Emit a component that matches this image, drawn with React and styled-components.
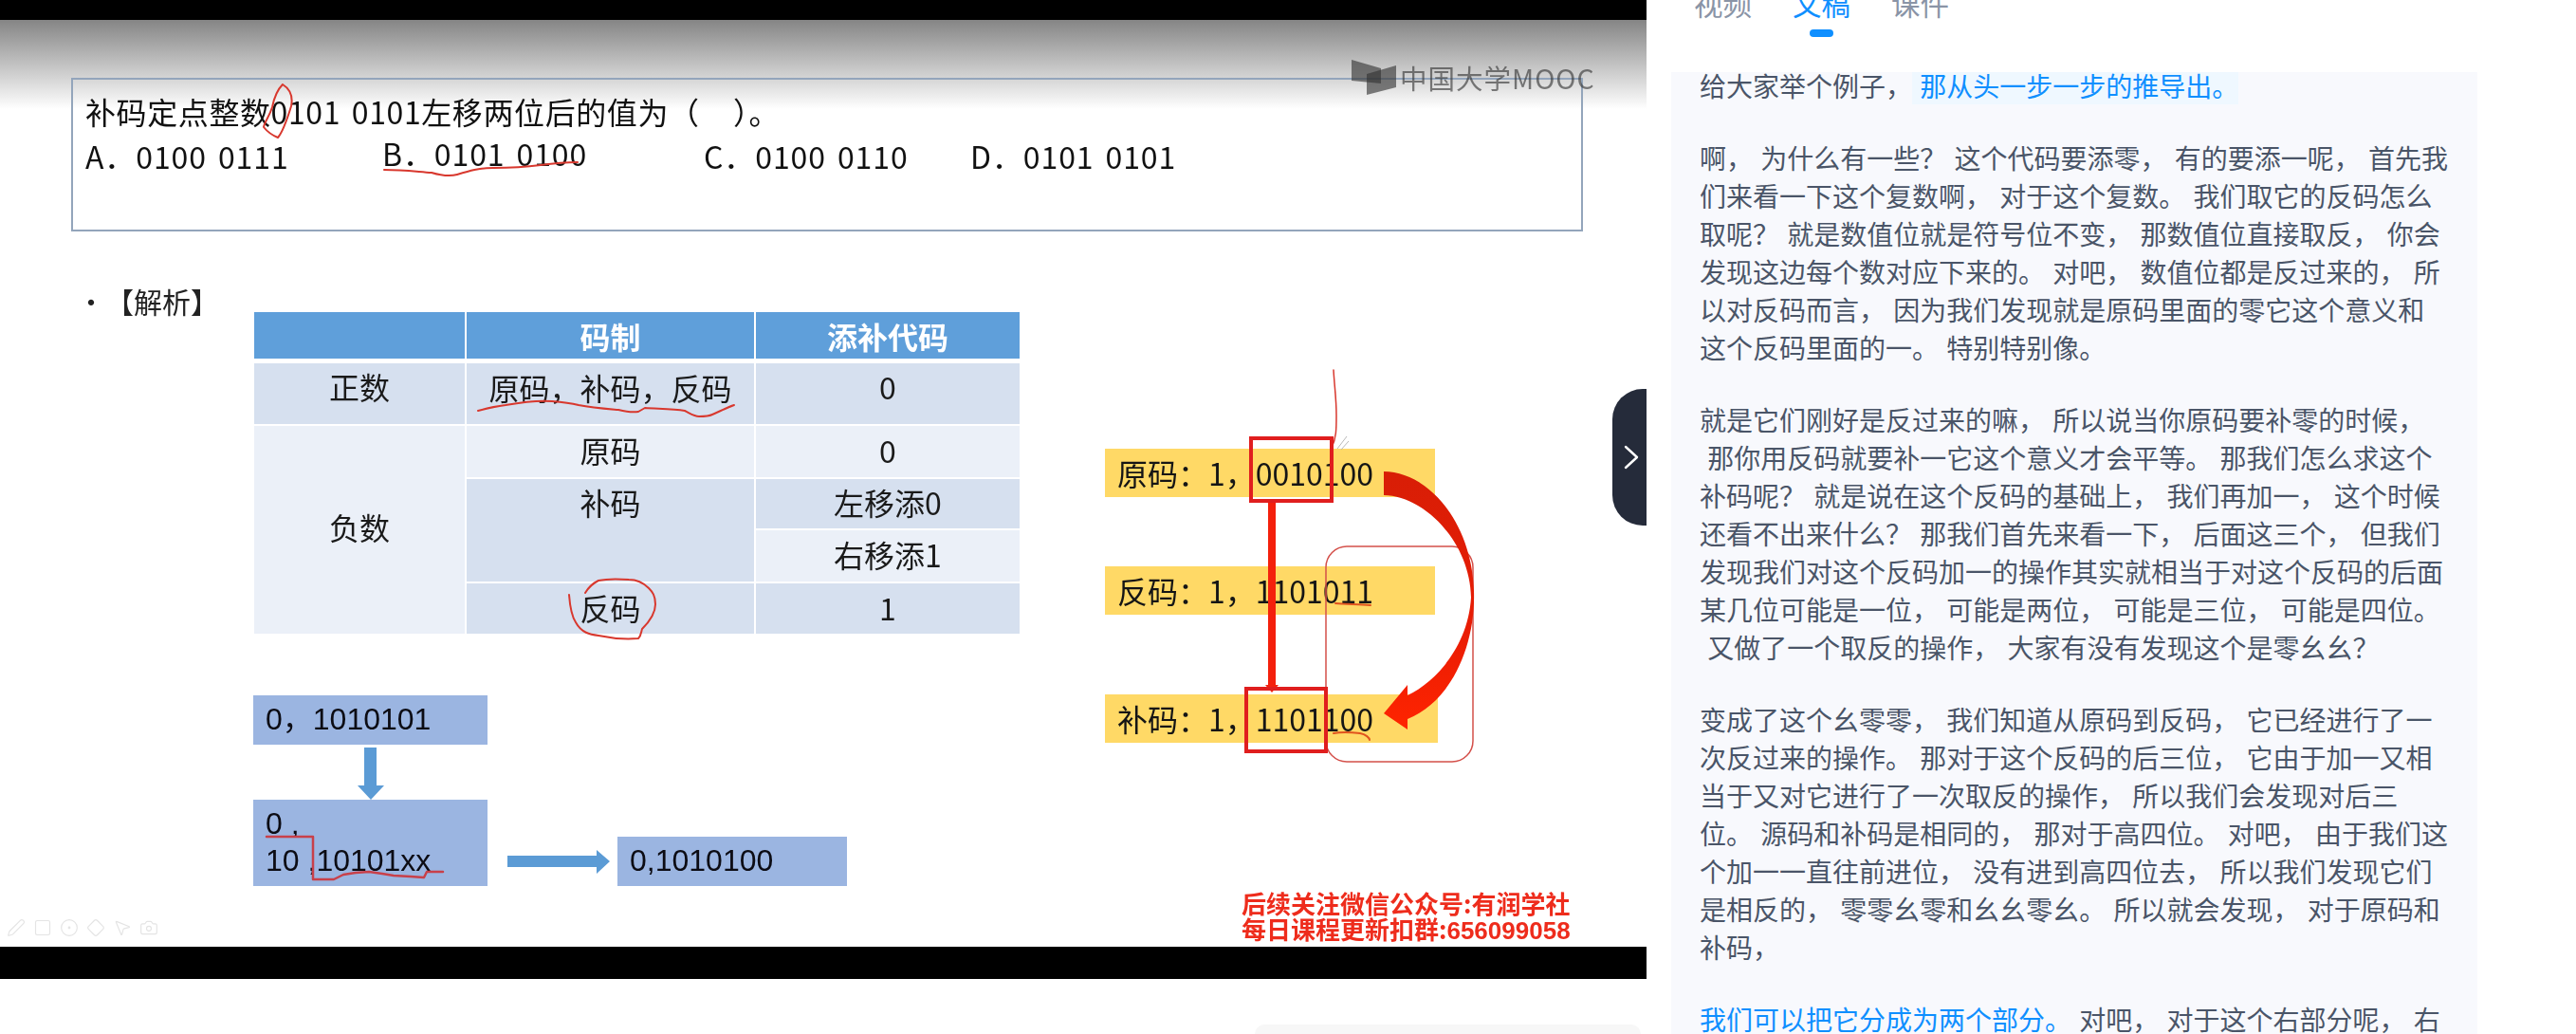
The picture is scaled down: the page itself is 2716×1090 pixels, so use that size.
import React from 'react';
import styled, { createGlobalStyle } from 'styled-components';
import { Pen, Square, CircleDot, Diamond, MousePointer2, Camera } from 'lucide-react';

const cjk = '"Noto Sans CJK SC", "Noto Sans", sans-serif';

const GlobalStyle = createGlobalStyle`
  html, body {
    margin: 0;
    padding: 0;
    background: #fff;
    font-family: ${cjk};
  }
`;

const Page = styled.div`
  display: flex;
  width: 2716px;
  height: 1090px;
  overflow: hidden;
  background: #fff;
`;

const LeftColumn = styled.div`
  position: relative;
  flex: 0 0 1736px;
  display: flex;
  flex-direction: column;
`;

const BlackBar = styled.div`
  height: ${(p) => p.$h}px;
  background: #000;
  flex: none;
  ${(p) => p.$edge && 'box-shadow: 0 -1px 0 #9a9a9a;'}
`;

const Slide = styled.div`
  height: 977px;
  flex: none;
  display: flex;
  flex-direction: column;
  overflow: hidden;
  color: #111;
  background: linear-gradient(#858585, #fff 94px);
  filter: blur(0.45px);
`;

const QuestionBox = styled.div`
  box-sizing: border-box;
  flex: none;
  width: 1594px;
  height: 162px;
  margin: 61px 0 0 75px;
  padding: 10px 0 0 13px;
  border: 2px solid #93a5bb;
`;

const QuestionText = styled.div`
  font-size: 32px;
  line-height: 47px;
  white-space: pre;
  letter-spacing: 0.6px;
  word-spacing: 4px;
`;

const Options = styled.div`
  display: grid;
  grid-template-columns: 313px 339px 281px auto;
  font-size: 32px;
  line-height: 47px;
  white-space: pre;
  letter-spacing: 0.9px;
  word-spacing: 4px;
`;

const Option = styled.span`
  position: relative;
  top: ${(p) => (p.$raised ? -3 : 0)}px;
`;

const Body = styled.div`
  display: flex;
  margin: 55px 0 0 91px;
`;

const Analysis = styled.div`
  flex: 0 0 984px;
`;

const AnalysisRow = styled.div`
  display: flex;
`;

const Heading = styled.div`
  flex: 0 0 187px;
  margin: -2px 0 0 -10px;
  font-size: 30px;
  line-height: 40px;
  color: #222;
  white-space: pre;
`;

const CodeTable = styled.div`
  margin-top: 30px;
  display: grid;
  grid-template-columns: 222px 303px 278px;
  grid-template-rows: 52px 64px 54px 52px 54px 53px;
  gap: 2px;
  font-size: 32px;
  line-height: 1;
`;

const Cell = styled.div`
  display: flex;
  align-items: ${(p) => (p.$top ? 'flex-start' : 'center')};
  justify-content: center;
  padding-top: ${(p) => p.$pt || 0}px;
  padding-bottom: ${(p) => p.$pb ?? 4}px;
  box-sizing: border-box;
  grid-row: span ${(p) => p.$rows || 1};
  background: ${(p) => (p.$tone === 'head' ? '#5f9fda' : p.$tone === 'dark' ? '#d6e0ef' : '#ebf0f8')};
  color: ${(p) => (p.$tone === 'head' ? '#fff' : '#1a1a1a')};
  font-weight: ${(p) => (p.$tone === 'head' ? 700 : 400)};
  ${(p) => p.$tone === 'head' && 'height: 49px;'}
`;

const Diagram = styled.div`
  display: flex;
  align-items: flex-end;
  margin: 65px 0 0 176px;
  font-family: "Liberation Sans", ${cjk};
  font-size: 32px;
  color: #0c0c14;
`;

const DiagramStack = styled.div`
  display: flex;
  flex-direction: column;
  align-items: center;
  width: 247px;
`;

const StepBox = styled.div`
  box-sizing: border-box;
  width: ${(p) => p.$w}px;
  height: ${(p) => p.$h}px;
  padding: 6px 0 0 13px;
  background: #9bb5e1;
  line-height: 39px;
  white-space: pre;
`;

const DiagramArrow = styled.svg`
  display: block;
  flex: none;
`;

const CodeStack = styled.div`
  margin: 174px 0 0 90px;
  display: flex;
  flex-direction: column;
`;

const CodeRow = styled.div`
  box-sizing: border-box;
  width: ${(p) => p.$w || 348}px;
  height: 51px;
  margin-bottom: ${(p) => p.$mb || 0}px;
  padding-left: 13px;
  background: #ffd966;
  font-size: 32px;
  line-height: 51px;
  white-space: pre;
  color: #151515;
`;

const SlideFooter = styled.div`
  margin-top: auto;
  display: flex;
  align-items: flex-end;
  justify-content: space-between;
  padding: 0 70px 3px 7px;
`;

const ToolStrip = styled.div`
  display: flex;
  gap: 8px;
  margin-bottom: 7px;
  color: #e4e4e4;
`;

const Promo = styled.div`
  width: 357px;
  font-size: 26px;
  line-height: 27px;
  font-weight: 700;
  color: #ee2c1c;
  white-space: pre;
`;

const PromoNum = styled.span`
  font-family: "Liberation Sans", sans-serif;
`;

const Scribbles = styled.svg`
  position: absolute;
  left: 0;
  top: 0;
  pointer-events: none;
  filter: blur(0.35px);
`;

const Watermark = styled.div`
  position: absolute;
  left: 1425px;
  top: 63px;
  display: flex;
  align-items: flex-start;
  gap: 4px;
  color: rgba(50, 50, 50, 0.62);
  font-size: 28.5px;
  line-height: 38px;
  letter-spacing: 1px;
  white-space: pre;
  filter: blur(0.4px);
`;

const Handle = styled.button`
  position: absolute;
  left: 1700px;
  top: 410px;
  width: 36px;
  height: 144px;
  padding: 0 0 0 4px;
  border: 0;
  border-radius: 32px 0 0 32px;
  background: #252b3a;
  display: flex;
  align-items: center;
  justify-content: center;
`;

const BottomPill = styled.div`
  margin: 48px 0 0 1323px;
  width: 407px;
  height: 40px;
  border-radius: 26px 26px 0 0;
  background: #f7f7f7;
`;

const RightColumn = styled.div`
  flex: 1;
  min-width: 0;
  padding-left: 26px;
`;

const Tabs = styled.div`
  display: flex;
  gap: 43px;
  height: 75px;
  margin-top: -17px;
  padding: 0 0 0 24px;
`;

const Tab = styled.div`
  display: flex;
  flex-direction: column;
  align-items: center;
  width: 61px;
  font-size: 30.5px;
  line-height: 40px;
  color: ${(p) => (p.$active ? '#0f8fff' : '#8a94a6')};
`;

const TabMark = styled.i`
  display: block;
  width: 25px;
  height: 8px;
  margin-top: 8px;
  border-radius: 4px;
  background: #0f8fff;
`;

const Transcript = styled.div`
  box-sizing: border-box;
  width: 850px;
  height: 1032px;
  overflow: hidden;
  padding: 0 30px;
  background: #f8f9fd;
  color: #4a5568;
  font-size: 28px;
  line-height: 40px;
  word-spacing: 2px;
  margin-top: 18px;
`;

const Paragraph = styled.p`
  margin: 0 0 36px;
  white-space: pre-wrap;
  &:first-child {
    margin-top: -6px;
  }
`;

const Live = styled.span`
  color: #0f8fff;
  background: ${(p) => (p.$bg ? '#eff8ff' : 'transparent')};
`;

export default function App() {
  return (
    <>
      <GlobalStyle />
      <Page>
        <LeftColumn>
          <BlackBar $h={21} />
          <Slide>
            <QuestionBox>
              <QuestionText>{'补码定点整数0101 0101左移两位后的值为（   ）。'}</QuestionText>
              <Options>
                <Option>A．0100 0111</Option>
                <Option $raised>B．0101 0100</Option>
                <Option>C．0100 0110</Option>
                <Option>D．0101 0101</Option>
              </Options>
            </QuestionBox>
            <Body>
              <Analysis>
                <AnalysisRow>
                  <Heading>•【解析】</Heading>
                  <CodeTable>
                    <Cell $tone="head" $pb={0} />
                    <Cell $tone="head" $pb={0}>码制</Cell>
                    <Cell $tone="head" $pb={0}>添补代码</Cell>
                    <Cell $tone="dark" $pb={17}>正数</Cell>
                    <Cell $tone="dark" $pb={14}>原码，补码，反码</Cell>
                    <Cell $tone="dark" $pb={17}>0</Cell>
                    <Cell $tone="light" $rows={4} $pb={8}>负数</Cell>
                    <Cell $tone="light">原码</Cell>
                    <Cell $tone="light">0</Cell>
                    <Cell $tone="dark" $rows={2} $top $pt={8}>补码</Cell>
                    <Cell $tone="dark">左移添0</Cell>
                    <Cell $tone="light">右移添1</Cell>
                    <Cell $tone="dark">反码</Cell>
                    <Cell $tone="dark">1</Cell>
                  </CodeTable>
                </AnalysisRow>
                <Diagram>
                  <DiagramStack>
                    <StepBox $w={247} $h={52}>{'0，1010101'}</StepBox>
                    <DiagramArrow width="28" height="58" viewBox="0 0 28 58">
                      <path d="M7 3h13v40h8L14 58 0 43h7z" fill="#5b9bd5" />
                    </DiagramArrow>
                    <StepBox $w={247} $h={91}>{'0 ,\n10 ,10101xx'}</StepBox>
                  </DiagramStack>
                  <DiagramArrow width="137" height="52" viewBox="0 0 137 52">
                    <path d="M21 20h94v-6l14 12-14 13v-7H21z" fill="#5b9bd5" />
                  </DiagramArrow>
                  <StepBox $w={242} $h={52}>0,1010100</StepBox>
                </Diagram>
              </Analysis>
              <CodeStack>
                <CodeRow $mb={73}>原码：1，0010100</CodeRow>
                <CodeRow $mb={84}>反码：1，1101011</CodeRow>
                <CodeRow $w={351}>补码：1，1101100</CodeRow>
              </CodeStack>
            </Body>
            <SlideFooter>
              <ToolStrip>
                <Pen size={20} strokeWidth={1.4} />
                <Square size={20} strokeWidth={1.4} />
                <CircleDot size={20} strokeWidth={1.4} />
                <Diamond size={20} strokeWidth={1.4} />
                <MousePointer2 size={20} strokeWidth={1.4} />
                <Camera size={20} strokeWidth={1.4} />
              </ToolStrip>
              <Promo>
                {'后续关注微信公众号:有润学社\n每日课程更新扣群:'}
                <PromoNum>656099058</PromoNum>
              </Promo>
            </SlideFooter>
          </Slide>
          <BlackBar $h={34} $edge />
          <BottomPill />

          <Watermark>
            <svg width="47" height="37" viewBox="0 0 47 37">
              <path d="M0 0l31 9v16L0 22z" fill="currentColor" />
              <path d="M47 6v23L16 37V15z" fill="currentColor" />
            </svg>
            中国大学MOOC
          </Watermark>

          <Scribbles width="1736" height="1090" viewBox="0 0 1736 1090" fill="none">
            <defs>
              <linearGradient id="bend" x1="0" y1="0" x2="0" y2="1">
                <stop offset="0" stopColor="#d81e06" />
                <stop offset="0.6" stopColor="#e81c04" />
                <stop offset="1" stopColor="#ff2400" />
              </linearGradient>
            </defs>
            {/* teacher's pen marks */}
            <g stroke="#d8382e" strokeWidth="2" strokeLinecap="round" strokeLinejoin="round">
              <path d="M298 89c-6 6-9 14-11 24-3 10-8 15-9 21 4 5 10 9 15 11 6-7 10-20 14-33 2-10-1-18-9-23z" />
              <path d="M405 179C425 179 440 181 455 182C465 185 475 186 482 184C495 180 505 177 520 177C540 177 555 176 570 174C585 172 600 171 609 171" />
              <path d="M504 433C515 430 525 428 533 427C550 424 570 422 582 423C595 424 602 425 610 427C625 430 640 431 652 432C660 434 667 435 673 434L680 430C695 431 710 431 722 433C728 436 732 439 737 439C743 439 747 439 751 437C760 433 768 429 774 427" />
              <path d="M600 627C601 640 603 650 607 656C613 667 622 669 631 670C645 673 660 674 673 673C676 670 676 666 677 663C685 655 691 647 691 637C691 628 688 624 684 620C678 614 670 611 663 611C650 610 640 610 631 612C625 615 620 620 617 625" />
              <path d="M281 882h49v45h22l10-5 13-2 14-1 14 2 12 2 18 1 14 1 3-6h17" strokeWidth="2.5" stroke="#c8404a" />
              <path d="M1406 390c1 18 3 30 3 48 0 14 0 24-5 34" strokeWidth="1.5" />
            </g>
            <path d="M1408 636c10 1 24 1 37 2M1406 773c10-2 20-1 28 0 6 1 10 5 10 7" stroke="#e0531e" strokeWidth="2" strokeLinecap="round" />
            <path d="M1410 473l10-13M1414 474l8-9" stroke="#b9b9b9" strokeWidth="1" />
            <rect x="1398" y="576" width="155" height="227" rx="22" stroke="#d4504a" strokeWidth="1.5" />
            {/* slide's own red marks */}
            <path d="M1459 497C1505 497 1552 550 1554 623C1556 680 1530 740 1484 758L1484 769L1459 752L1484 722L1484 733C1515 718 1548 680 1551 630C1550 570 1500 522 1459 522Z" fill="url(#bend)" />
            <path d="M1337 528h8v194h3l-7 8-7-8h3z" fill="#f4200c" />
            <rect x="1319" y="462" width="85" height="66" stroke="#e01e1e" strokeWidth="4" />
            <rect x="1314" y="726" width="84" height="66" stroke="#e01e1e" strokeWidth="4" />
          </Scribbles>

          <Handle aria-label="收起">
            <svg width="16" height="26" viewBox="0 0 16 26" fill="none">
              <path d="M2 2l12 11L2 24" stroke="#fff" strokeWidth="2.4" strokeLinecap="round" strokeLinejoin="round" />
            </svg>
          </Handle>
        </LeftColumn>

        <RightColumn>
          <Tabs>
            <Tab>视频</Tab>
            <Tab $active>
              文稿
              <TabMark />
            </Tab>
            <Tab>课件</Tab>
          </Tabs>
          <Transcript>
            <Paragraph>
              给大家举个例子，<Live $bg> 那从头一步一步的推导出。</Live>
            </Paragraph>
            <Paragraph>
              啊， 为什么有一些？ 这个代码要添零， 有的要添一呢， 首先我们来看一下这个复数啊， 对于这个复数。 我们取它的反码怎么取呢？ 就是数值位就是符号位不变， 那数值位直接取反， 你会发现这边每个数对应下来的。 对吧， 数值位都是反过来的， 所以对反码而言， 因为我们发现就是原码里面的零它这个意义和这个反码里面的一。 特别特别像。
            </Paragraph>
            <Paragraph>
              就是它们刚好是反过来的嘛， 所以说当你原码要补零的时候，{'\n '}那你用反码就要补一它这个意义才会平等。 那我们怎么求这个补码呢？ 就是说在这个反码的基础上， 我们再加一， 这个时候还看不出来什么？ 那我们首先来看一下， 后面这三个， 但我们发现我们对这个反码加一的操作其实就相当于对这个反码的后面某几位可能是一位， 可能是两位， 可能是三位， 可能是四位。{'\n '}又做了一个取反的操作， 大家有没有发现这个是零幺幺？
            </Paragraph>
            <Paragraph>
              变成了这个幺零零， 我们知道从原码到反码， 它已经进行了一次反过来的操作。 那对于这个反码的后三位， 它由于加一又相当于又对它进行了一次取反的操作， 所以我们会发现对后三位。 源码和补码是相同的， 那对于高四位。 对吧， 由于我们这个加一一直往前进位， 没有进到高四位去， 所以我们发现它们是相反的， 零零幺零和幺幺零幺。 所以就会发现， 对于原码和补码，
            </Paragraph>
            <Paragraph>
              <Live>我们可以把它分成为两个部分。</Live> 对吧， 对于这个右部分呢， 右
            </Paragraph>
          </Transcript>
        </RightColumn>
      </Page>
    </>
  );
}
